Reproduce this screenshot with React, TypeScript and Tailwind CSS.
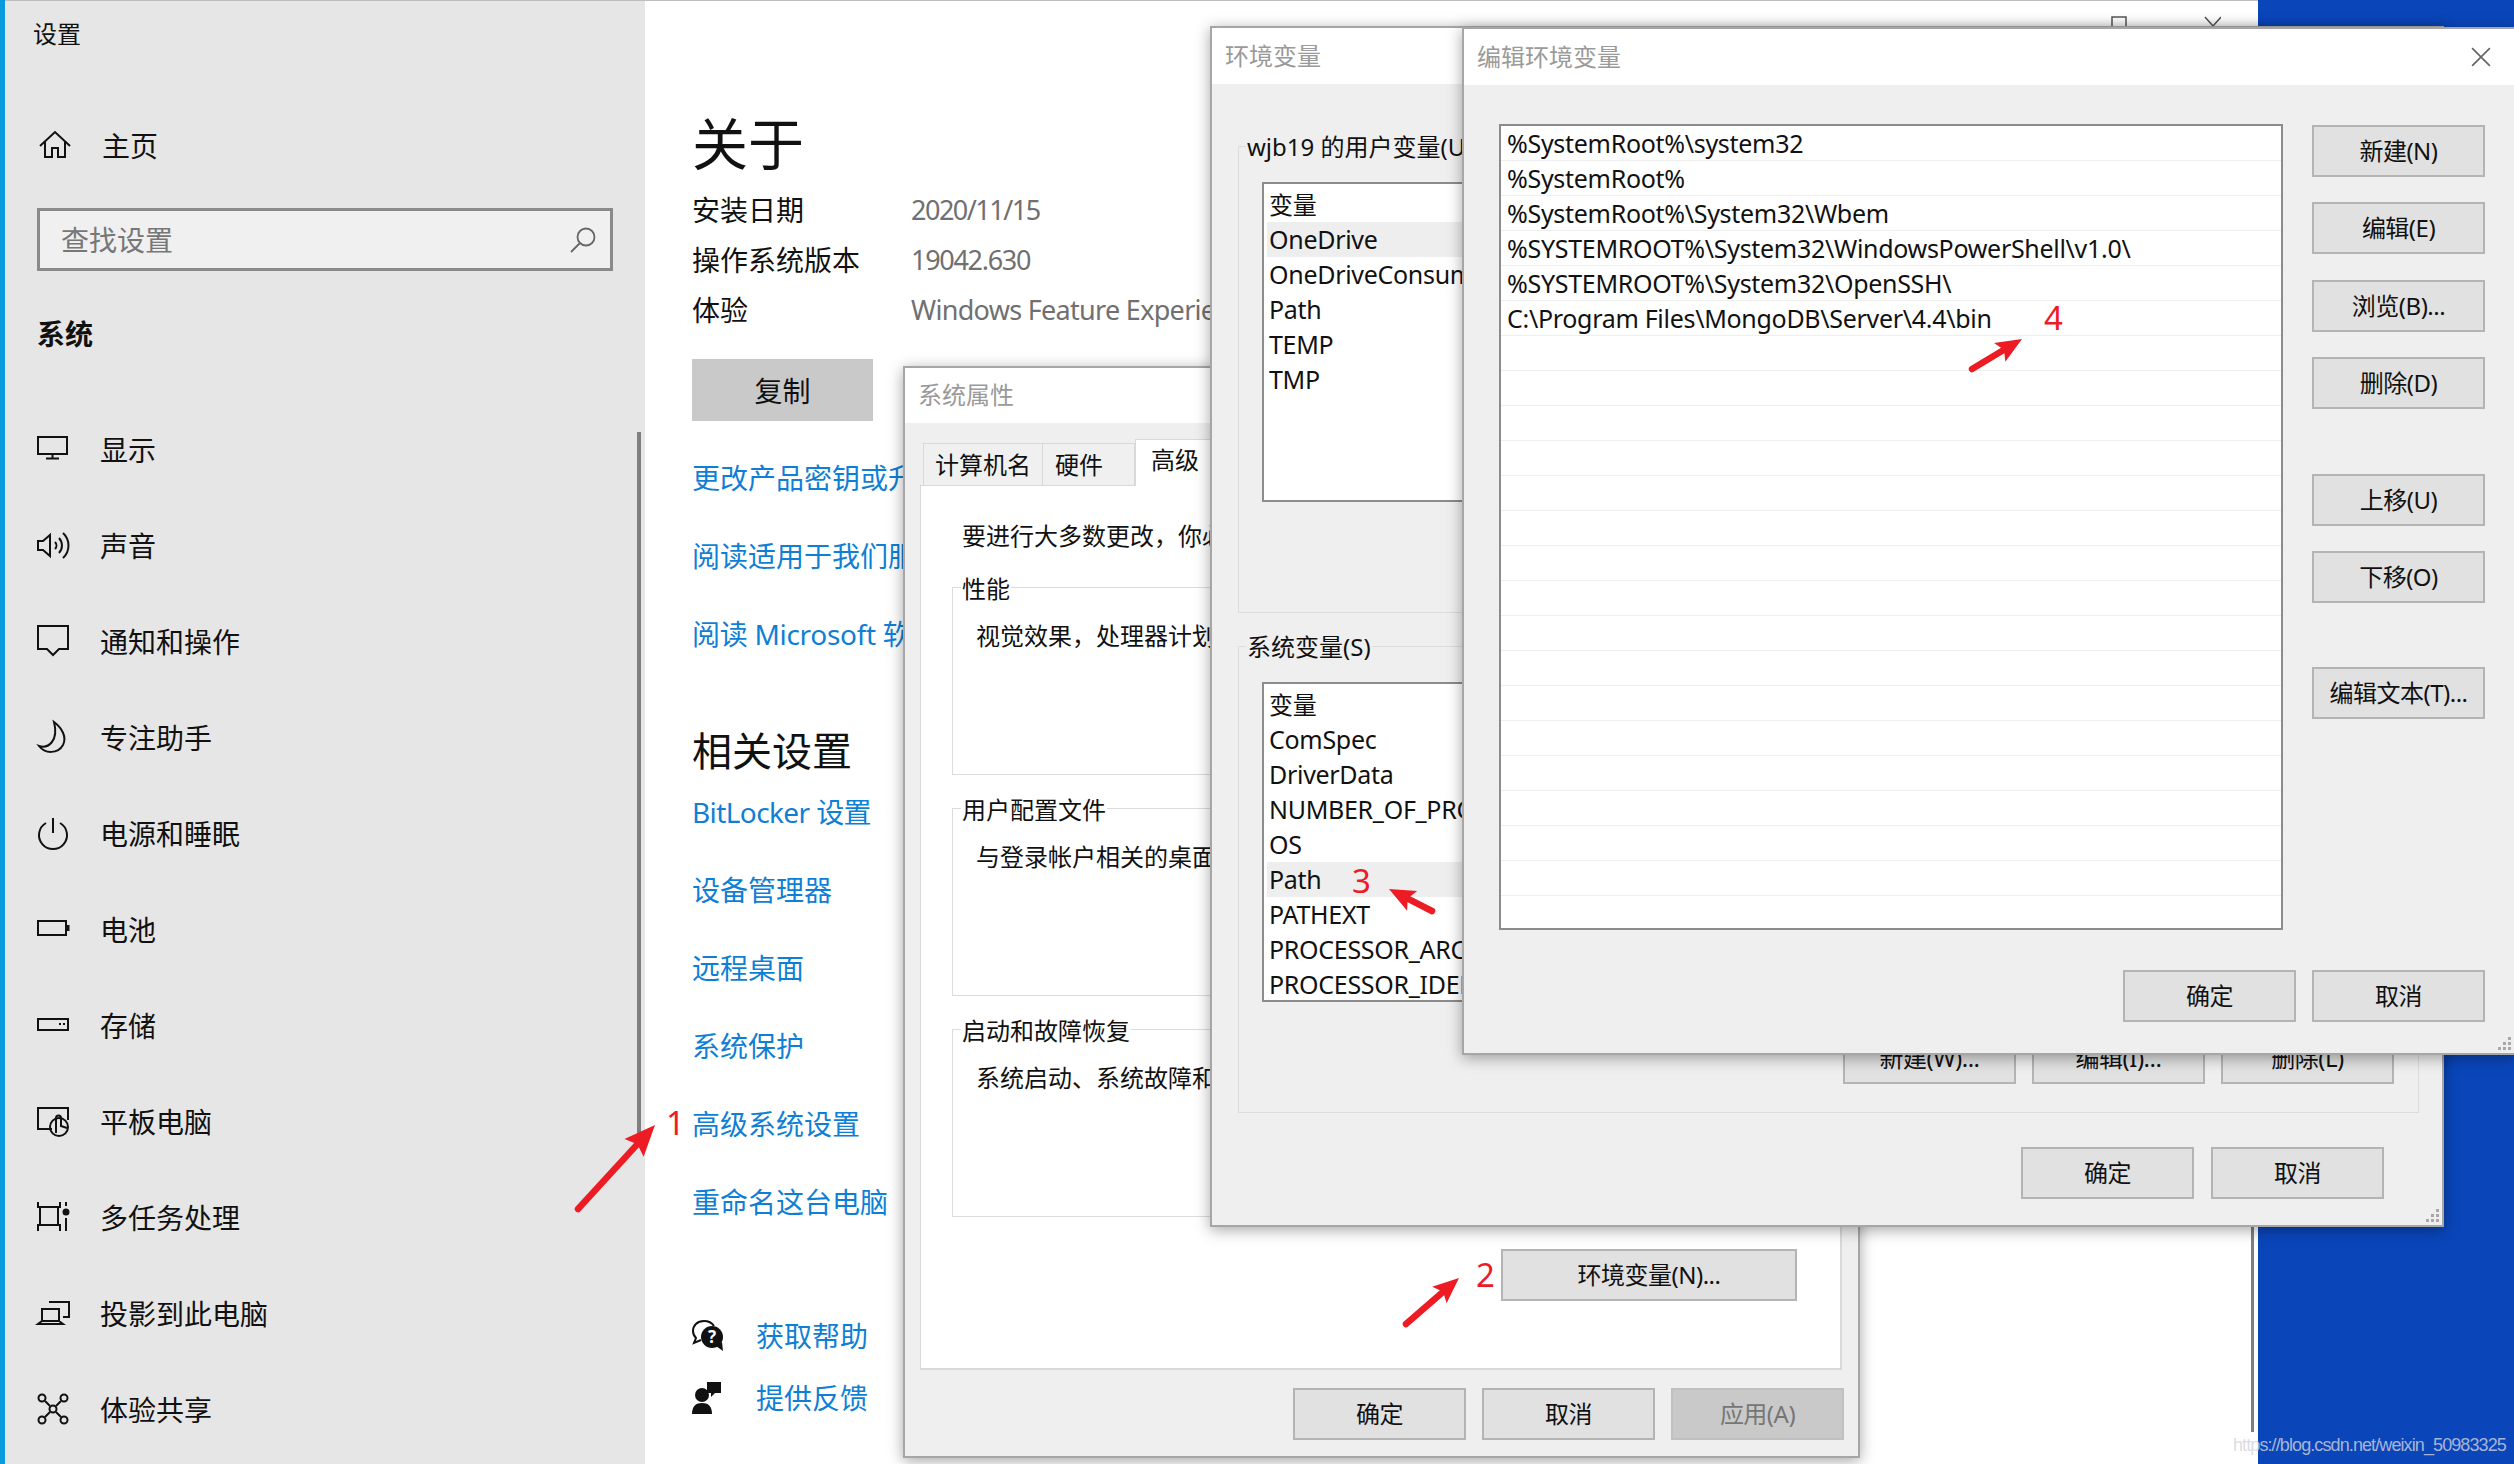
import type { ReactNode } from "react"

// small line icons for the settings sidebar, all on the same 34x32 box
const Ico = ({ children }: { children: ReactNode }) => (
  <svg viewBox="0 0 34 32" fill="none" stroke="#111" strokeWidth="2" className="w-[34px] h-[32px] shrink-0 overflow-visible">
    {children}
  </svg>
)

const navItems: { label: string; icon: ReactNode }[] = [
  { label: "显示", icon: <><rect x="1" y="3" width="29" height="17" /><path d="M15.5 20v4M9 24.500h13" /></> },
  { label: "声音", icon: <><path d="M1 11h5l7-6v21l-7-6H1z" /><path d="M18 12a5 5 0 0 1 0 7M22 8a11 11 0 0 1 0 15M26 3a17 17 0 0 1 0 25" /></> },
  { label: "通知和操作", icon: <path d="M1 0h30v23H22l-6 6-6-6H1z" /> },
  { label: "专注助手", icon: <path d="M17 0c8 6 13 15 9 23-5 9-18 9-24 1 9 3 20-5 15-24z" /> },
  { label: "电源和睡眠", icon: <><path d="M16 0v15" /><path d="M9 5a14 14 0 1 0 14 0" /></> },
  { label: "电池", icon: <><rect x="1" y="7" width="28" height="14" /><path d="M31 11v6" strokeWidth="3" /></> },
  { label: "存储", icon: <><rect x="1" y="9" width="30" height="11" /><path d="M22 14h2M26 14h2" /></> },
  { label: "平板电脑", icon: <><path d="M15 23H1V2h30v12" /><circle cx="22" cy="21" r="9" /><path d="M19 27V12a2.500 2.500 0 0 1 5 0v8l6 2" /></> },
  { label: "多任务处理", icon: <><path d="M1 0v5h22V0M3 5v18M21 5v18M1 29v-6h22v6M29 0v4M29 16v13" /><circle cx="29" cy="10" r="2.500" fill="#111" /></> },
  { label: "投影到此电脑", icon: <><path d="M12 4h20v15h-6" /><path d="M5 11h17v12H5zM1 26h25l-4-3H5z" /></> },
  { label: "体验共享", icon: <><circle cx="5" cy="4" r="3.500" /><circle cx="27" cy="4" r="3.500" /><circle cx="5" cy="26" r="3.500" /><circle cx="27" cy="26" r="3.500" /><circle cx="16" cy="15" r="3.500" /><path d="M8 7l5 5M24 7l-5 5M8 23l5-5M24 23l-5-5" /></> },
]

const Btn = ({ children, className = "", disabled }: { children: ReactNode; className?: string; disabled?: boolean }) => (
  <div className={`flex items-center justify-center w-[173px] h-[52px] shrink-0 border-2 text-[24px] tracking-[-0.5px] ${disabled ? "bg-[#c9c9c9] border-[#c0c0c0] text-[#767676]" : "bg-[#e1e1e1] border-[#b4b4b4] text-[#111]"} ${className}`}>
    {children}
  </div>
)

const Grip = ({ className = "right-[2px]" }: { className?: string }) => (
  <svg viewBox="0 0 14 14" fill="#a8a8a8" className={`absolute bottom-[2px] w-[14px] h-[14px] ${className}`}>
    <rect x="10" y="0" width="3" height="3" />
    <rect x="5" y="5" width="3" height="3" />
    <rect x="10" y="5" width="3" height="3" />
    <rect x="0" y="10" width="3" height="3" />
    <rect x="5" y="10" width="3" height="3" />
    <rect x="10" y="10" width="3" height="3" />
  </svg>
)

// dialog chrome: white caption + grey client area
const Win = ({ title, className, children, titleH = "h-[56px]" }: { title: string; className: string; children: ReactNode; titleH?: string }) => (
  <div className={`absolute flex flex-col overflow-hidden bg-white border-2 border-[#a6a6a6] shadow-[0_3px_14px_rgba(0,0,0,0.35)] ${className}`}>
    <div className={`${titleH} shrink-0 flex items-center pl-[13px] pb-[1px] text-[24px] text-[#9a9a9a] bg-white`}>{title}</div>
    <div className="relative flex-1 flex flex-col bg-[#efefef]">{children}</div>
  </div>
)

const Group = ({ label, text }: { label: string; text: string }) => (
  <div className="relative h-[188px] mt-[33px] border border-[#dcdcdc] pt-[30px] pl-[23px] text-[24px] leading-[36px] whitespace-nowrap text-[#111]">
    <span className="absolute left-[8px] -top-[17px] px-[1px] bg-white">{label}</span>
    {text}
  </div>
)

const VarList = ({ rows, active, className = "" }: { rows: string[]; active: string; className?: string }) => (
  <div className={`h-[320px] ml-[23px] mr-[24px] pl-[3px] bg-white border-2 border-[#8c8c8c] overflow-hidden text-[25px] tracking-[-0.3px] text-[#111] ${className}`}>
    <div className="h-[38px] pl-[2px] flex items-center pt-[4px] text-[24px]">变量</div>
    {rows.map(r => (
      <div key={r} className={`h-[35px] pl-[2px] leading-[35px] whitespace-nowrap ${r === active ? "bg-[#eeeeee]" : ""}`}>{r}</div>
    ))}
  </div>
)

const paths = [
  "%SystemRoot%\\system32",
  "%SystemRoot%",
  "%SystemRoot%\\System32\\Wbem",
  "%SYSTEMROOT%\\System32\\WindowsPowerShell\\v1.0\\",
  "%SYSTEMROOT%\\System32\\OpenSSH\\",
  "C:\\Program Files\\MongoDB\\Server\\4.4\\bin",
]

// red annotation arrow, tail -> tip
const Arrow = ({ x1, y1, x2, y2, len = 26, wide = 11 }: { x1: number; y1: number; x2: number; y2: number; len?: number; wide?: number }) => {
  const d = Math.hypot(x2 - x1, y2 - y1)
  const ux = (x2 - x1) / d
  const uy = (y2 - y1) / d
  const bx = x2 - ux * len
  const by = y2 - uy * len
  const pts = `${x2},${y2} ${bx - uy * wide},${by + ux * wide} ${bx + ux * 5},${by + uy * 5} ${bx + uy * wide},${by - ux * wide}`
  return (
    <>
      <line x1={x1} y1={y1} x2={bx + ux * 5} y2={by + uy * 5} stroke="#ed1c24" strokeWidth="6.500" strokeLinecap="round" />
      <polygon points={pts} fill="#ed1c24" />
    </>
  )
}

const Mark = ({ className, children }: { className: string; children: ReactNode }) => (
  <span className={`absolute text-[33px] leading-[40px] text-[#ed1c24] ${className}`}>{children}</span>
)

const linkCls = "h-[78px] flex items-center whitespace-nowrap text-[28px] text-[#0f7fd6]"

export default function App() {
  const blank = Array.from({ length: 23 }, (_, i) => paths[i] ?? "")
  return (
    <div className="relative flex w-[2514px] h-[1464px] overflow-hidden bg-[#0a46ba] font-['Noto_Sans','Noto_Sans_CJK_SC',sans-serif] text-[#111]">
      {/* left accent */}
      <div className="w-[5px] shrink-0 bg-[#0a9ade]" />

      {/* SETTINGS SIDEBAR */}
      <div className="relative w-[640px] shrink-0 flex flex-col bg-[#e6e6e6] border-t border-[#bdbdbd] pt-[16px]">
        <div className="pl-[28px] text-[24px] leading-[34px]">设置</div>
        <div className="flex items-center h-[48px] mt-[71px] pl-[32px] text-[28px]">
          <Ico><path d="M3 16 18 2l15 14M8 12v15h7V18h6v9h7V12" /></Ico>
          <span className="ml-[31px]">主页</span>
        </div>
        <div className="flex items-center justify-between h-[63px] mt-[38px] ml-[32px] w-[576px] pl-[21px] pr-[14px] bg-[#f0f0f0] border-[3px] border-[#8a8a8a] text-[28px] text-[#777]">
          查找设置
          <svg viewBox="0 0 26 26" fill="none" stroke="#666" strokeWidth="1.800" className="w-[26px] h-[26px]">
            <circle cx="16" cy="10" r="8.500" /><path d="M10 16 1 25" />
          </svg>
        </div>
        <div className="h-[40px] mt-[43px] pl-[32px] text-[28px] leading-[40px] font-bold">系统</div>
        <div className="flex flex-col mt-[48px]">
          {navItems.map(n => (
            <div key={n.label} className="flex items-center h-[96px] pl-[32px] text-[28px]">
              <Ico>{n.icon}</Ico>
              <span className="ml-[29px]">{n.label}</span>
            </div>
          ))}
        </div>
        <div className="absolute left-[632px] top-[431px] w-[4px] h-[701px] bg-[#7f7f7f]" />
      </div>

      {/* SETTINGS CONTENT */}
      <div className="relative w-[1613px] shrink-0 flex flex-col bg-white border-t border-[#bdbdbd] pt-[110px] pl-[47px]">
        <div className="text-[56px] leading-[64px]">关于</div>
        <div className="mt-[10px] flex flex-col text-[28px]">
          <div className="flex items-center h-[50px]"><span className="w-[219px]">安装日期</span><span className="text-[27px] tracking-[-1.500px] text-[#707070]">2020/11/15</span></div>
          <div className="flex items-center h-[50px]"><span className="w-[219px]">操作系统版本</span><span className="text-[27px] tracking-[-1.300px] text-[#707070]">19042.630</span></div>
          <div className="flex items-center h-[50px] whitespace-nowrap"><span className="w-[219px]">体验</span><span className="text-[27px] tracking-[-0.700px] text-[#707070]">Windows Feature Experience Pack</span></div>
        </div>
        <div className="flex items-center justify-center w-[181px] h-[62px] mt-[24px] pt-[2px] bg-[#c9c9c9] text-[28px]">复制</div>
        <div className="mt-[18px] flex flex-col">
          <div className={linkCls}>更改产品密钥或升级 Windows</div>
          <div className={linkCls}>阅读适用于我们服务的协议</div>
          <div className={`${linkCls} tracking-[-0.300px]`}>阅读 Microsoft 软件许可条款</div>
        </div>
        <div className="mt-[56px] text-[40px] leading-[44px]">相关设置</div>
        <div className="flex flex-col">
          <div className={`${linkCls} tracking-[-0.600px]`}>BitLocker 设置</div>
          <div className={linkCls}>设备管理器</div>
          <div className={linkCls}>远程桌面</div>
          <div className={linkCls}>系统保护</div>
          <div className={linkCls}>高级系统设置</div>
          <div className={linkCls}>重命名这台电脑</div>
        </div>
        <div className="mt-[64px] flex items-center h-[62px] gap-[32px] text-[28px] text-[#0f7fd6]">
          <svg viewBox="0 0 32 32" className="w-[32px] h-[32px] shrink-0 overflow-visible">
            <path d="M12 1C5 1 1 5.500 1 11c0 3 1 5 3 7l-2 5 7-3" fill="none" stroke="#111" strokeWidth="2" />
            <path d="M12 1c5 0 8 2 10 5" fill="none" stroke="#111" strokeWidth="2" />
            <circle cx="20" cy="17" r="11" fill="#111" />
            <path d="M24 26l7 5-1-9z" fill="#111" />
            <text x="20" y="23" textAnchor="middle" fontSize="17" fontWeight="700" fill="#fff">?</text>
          </svg>
          获取帮助
        </div>
        <div className="flex items-center h-[62px] gap-[32px] text-[28px] text-[#0f7fd6]">
          <svg viewBox="0 0 32 32" className="w-[32px] h-[32px] shrink-0" fill="#111">
            <circle cx="10" cy="13" r="7" />
            <path d="M0 32c0-8 4-11 10-11s10 3 10 11z" />
            <path d="M15 0h14v11h-6l-4 4v-4h-4z" />
          </svg>
          提供反馈
        </div>
        {/* caption buttons that peek out above the dialogs */}
        <svg viewBox="0 0 110 12" fill="none" stroke="#555" strokeWidth="1.500" className="absolute left-[1466px] top-[15px] w-[110px] h-[12px]">
          <rect x="1" y="1" width="14" height="14" />
          <path d="M94 1l8 9M110 1l-8 9" />
        </svg>
        <div className="absolute left-[1606px] top-[1000px] w-[3px] h-[431px] bg-[#7f7f7f]" />
      </div>

      {/* 系统属性 */}
      <Win title="系统属性" className="left-[903px] top-[366px] w-[957px] h-[1092px]" titleH="h-[55px]">
        <div className="flex items-end h-[46px] mt-[16px] ml-[18px] text-[24px]">
          <div className="flex items-center pl-[11px] w-[120px] h-[42px] bg-[#f0f0f0] border border-b-0 border-[#d9d9d9]">计算机名</div>
          <div className="flex items-center pl-[12px] w-[92px] h-[42px] bg-[#f0f0f0] border border-l-0 border-b-0 border-[#d9d9d9]">硬件</div>
          <div className="relative flex pl-[15px] pt-[2px] w-[90px] h-[47px] -mb-px bg-white border border-b-0 border-[#d9d9d9]">高级</div>
        </div>
        <div className="flex flex-col w-[922px] h-[885px] ml-[15px] px-[31px] pt-[32px] bg-white border border-[#d9d9d9] border-b-2 border-r-2">
          <div className="ml-[10px] h-[36px] text-[24px] leading-[36px] whitespace-nowrap">{"要进行大多数更改\uFF0C你必须作为管理员登录。"}</div>
          <Group label="性能" text={"视觉效果\uFF0C处理器计划\uFF0C内存使用"} />
          <Group label="用户配置文件" text="与登录帐户相关的桌面设置" />
          <Group label="启动和故障恢复" text="系统启动、系统故障和调试信息" />
          <div className="self-end mr-[12px] mt-[32px] flex items-center justify-center w-[296px] h-[52px] bg-[#e1e1e1] border-2 border-[#b4b4b4] text-[24px] tracking-[-0.5px]">环境变量(N)...</div>
        </div>
        <div className="flex justify-end gap-[16px] mt-[18px] pr-[14px]">
          <Btn>确定</Btn>
          <Btn>取消</Btn>
          <Btn disabled>应用(A)</Btn>
        </div>
      </Win>

      {/* 环境变量 */}
      <Win title="环境变量" className="left-[1210px] top-[26px] w-[1234px] h-[1201px]">
        <div className="relative h-[467px] ml-[26px] mt-[62px] w-[1181px] border border-[#dcdcdc] pt-[35px]">
          <span className="absolute left-[7px] -top-[18px] px-[1px] bg-[#efefef] text-[24px] leading-[36px]">wjb19 的用户变量(U)</span>
          <VarList rows={["OneDrive", "OneDriveConsumer", "Path", "TEMP", "TMP"]} active="OneDrive" />
        </div>
        <div className="relative h-[467px] ml-[26px] mt-[33px] w-[1181px] border border-[#dcdcdc] pt-[35px]">
          <span className="absolute left-[7px] -top-[18px] px-[1px] bg-[#efefef] text-[24px] leading-[36px]">系统变量(S)</span>
          <VarList rows={["ComSpec", "DriverData", "NUMBER_OF_PROCESSORS", "OS", "Path", "PATHEXT", "PROCESSOR_ARCHITECTURE", "PROCESSOR_IDENTIFIER"]} active="Path" />
          <div className="flex justify-end gap-[16px] mt-[30px] mr-[24px]">
            <Btn>新建(W)...</Btn>
            <Btn>编辑(I)...</Btn>
            <Btn>删除(L)</Btn>
          </div>
        </div>
        <div className="flex justify-end gap-[17px] mt-[34px] pr-[58px]">
          <Btn>确定</Btn>
          <Btn>取消</Btn>
        </div>
        <Grip />
      </Win>

      {/* 编辑环境变量 */}
      <Win title="编辑环境变量" className="left-[1462px] top-[27px] w-[1054px] h-[1028px] border-r-0">
        <svg viewBox="0 0 18 18" fill="none" stroke="#666" strokeWidth="1.500" className="absolute left-[1007px] -top-[38px] w-[20px] h-[20px]">
          <path d="M1 1l16 16M17 1 1 17" />
        </svg>
        <div className="flex mt-[39px] ml-[35px]">
          <div className="w-[784px] h-[806px] bg-white border-2 border-[#8c8c8c] text-[25px] tracking-[-0.3px] overflow-hidden">
            {blank.map((p, i) => (
              <div key={i} className="h-[35px] pl-[6px] leading-[35px] whitespace-nowrap border-b border-[#eeeeee]">{p}</div>
            ))}
          </div>
          <div className="flex flex-col ml-[29px] mt-[1px]">
            <Btn>新建(N)</Btn>
            <Btn className="mt-[25px]">编辑(E)</Btn>
            <Btn className="mt-[26px]">浏览(B)...</Btn>
            <Btn className="mt-[25px]">删除(D)</Btn>
            <Btn className="mt-[65px]">上移(U)</Btn>
            <Btn className="mt-[25px]">下移(O)</Btn>
            <Btn className="mt-[64px]">编辑文本(T)...</Btn>
          </div>
        </div>
        <div className="flex justify-end gap-[16px] mt-[40px] pr-[31px]">
          <Btn>确定</Btn>
          <Btn>取消</Btn>
        </div>
        <Grip className="right-[4px]" />
      </Win>

      {/* annotations */}
      <svg viewBox="0 0 2514 1464" className="absolute inset-0 w-[2514px] h-[1464px] pointer-events-none">
        <Arrow x1={578} y1={1209} x2={655} y2={1125} len={31} wide={13} />
        <Arrow x1={1406} y1={1324} x2={1459} y2={1278} />
        <Arrow x1={1432} y1={911} x2={1389} y2={889} />
        <Arrow x1={1972} y1={369} x2={2022} y2={339} />
      </svg>
      <Mark className="left-[666px] top-[1103px]">1</Mark>
      <Mark className="left-[1476px] top-[1255px]">2</Mark>
      <Mark className="left-[1352px] top-[861px]">3</Mark>
      <Mark className="left-[2044px] top-[298px]">4</Mark>

      <div className="absolute left-[2233px] top-[1434px] font-['Liberation_Sans',sans-serif] text-[18px] leading-[22px] tracking-[-0.9px] text-[#d2d2dc]/80">https://blog.csdn.net/weixin_50983325</div>
    </div>
  )
}
